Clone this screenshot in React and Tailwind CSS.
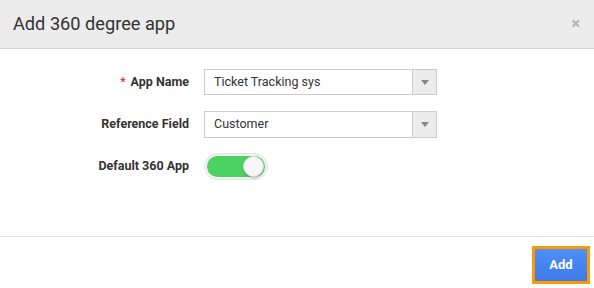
export default function App() {
  return (
    <div className="w-[594px] h-[288px] bg-white overflow-hidden flex flex-col" style={{ fontFamily: "Roboto, 'Liberation Sans', sans-serif" }}>
      <div className="h-[49px] shrink-0 bg-[#ececec] border-b border-[#d2d2d2] flex items-center justify-between pl-[13px] pr-[14px]">
        <div className="text-[18.2px] text-[#333] leading-none">Add 360 degree app</div>
        <div className="text-[16px] font-bold text-[#b5b5b5] leading-none">×</div>
      </div>
      <div className="h-[188px] shrink-0 border-b border-[#e5e5e5] flex flex-col pt-[20px] gap-[16px]">
        <div className="flex items-center h-[26px]">
          <div className="w-[190px] pr-[1px] text-right text-[12.5px] font-bold text-[#333]"><span className="text-[#e02020] mr-[5px] font-normal">*</span>App Name</div>
          <div className="ml-[14px] w-[233px] h-[26px] border border-[#ccc] flex">
            <div className="flex-1 flex items-center pl-[9px] text-[12.5px] text-[#333]">Ticket Tracking sys</div>
            <div className="w-[24px] bg-[#ececec] border-l border-[#ccc] flex items-center justify-center">
              <svg width="8" height="5" viewBox="0 0 8 5"><path d="M0 0h8L4 5z" fill="#888" /></svg>
            </div>
          </div>
        </div>
        <div className="flex items-center h-[27px]">
          <div className="w-[190px] pr-[1px] text-right text-[12.5px] font-bold text-[#333]">Reference Field</div>
          <div className="ml-[14px] w-[233px] h-[27px] border border-[#ccc] flex">
            <div className="flex-1 flex items-center pl-[9px] text-[12.5px] text-[#333]">Customer</div>
            <div className="w-[24px] bg-[#ececec] border-l border-[#ccc] flex items-center justify-center">
              <svg width="8" height="5" viewBox="0 0 8 5"><path d="M0 0h8L4 5z" fill="#888" /></svg>
            </div>
          </div>
        </div>
        <div className="flex items-center h-[27px] -mt-[1px]">
          <div className="w-[190px] pr-[1px] text-right text-[12.5px] font-bold text-[#333]">Default 360 App</div>
          <div className="ml-[14px] w-[64px] h-[27px] rounded-full border border-[#e3e3e3] bg-[#f2f2f2] p-[2px] flex">
            <div className="flex-1 rounded-full bg-[#4cd263] flex justify-end items-center pr-[1px]">
              <div className="w-[21px] h-[21px] rounded-full bg-[#f7f7f7] border border-[#dedede] shadow-[0_1px_2px_rgba(0,0,0,0.25)]" />
            </div>
          </div>
        </div>
      </div>
      <div className="flex-1 flex justify-end items-start pt-[9px] pr-[4px]">
        <div className="border-[3px] border-[#ff9900] bg-[#ff9900]">
          <div className="w-[52px] h-[32px] bg-gradient-to-b from-[#4d8ff7] to-[#3d7ae8] flex items-center justify-center text-white font-bold text-[13px]">Add</div>
        </div>
      </div>
    </div>
  );
}
